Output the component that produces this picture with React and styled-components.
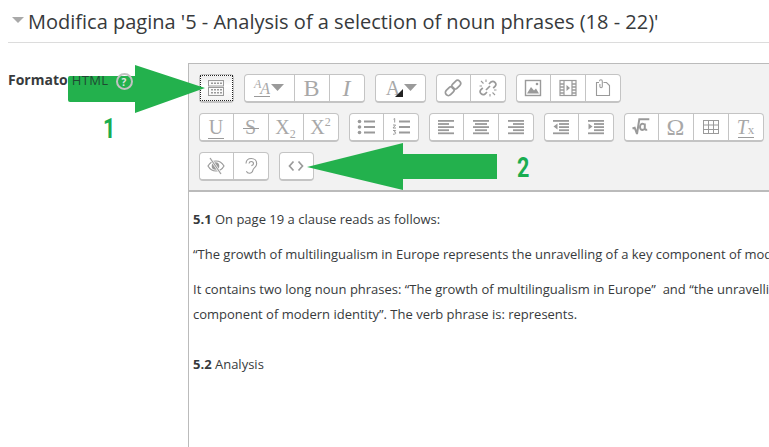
import React from "react";
import styled, { createGlobalStyle } from "styled-components";

const GlobalStyle = createGlobalStyle`
  html, body {
    margin: 0;
    padding: 0;
    background: #fff;
  }
  body {
    font-family: "Open Sans", "Liberation Sans", sans-serif;
    color: #373a3c;
  }
`;

const ICON = "#9a9a9a";

const Svg = ({ children, w = 18, h = 18, vb }) => (
  <svg width={w} height={h} viewBox={vb || `0 0 ${w} ${h}`} fill="none">
    {children}
  </svg>
);

const KitchenSink = () => (
  <Svg>
    <rect x="1.5" y="1.5" width="15" height="5.5" stroke={ICON} />
    <rect x="1.5" y="8.5" width="15" height="8" stroke={ICON} />
    <path d="M4 4.2h2M7 4.2h2M10 4.2h2M13 4.2h2M4 10.8h2M7 10.8h2M10 10.8h2M13 10.8h2M4 13.8h2M7 13.8h2M10 13.8h2M13 13.8h2" stroke={ICON} strokeWidth="1.4" />
  </Svg>
);

const Caret = () => (
  <svg width="13" height="7" viewBox="0 0 13 7">
    <path d="M0 0h13L6.5 7z" fill={ICON} />
  </svg>
);

const BulletList = () => (
  <Svg>
    <g fill={ICON}>
      <circle cx="2.5" cy="3.5" r="1.8" />
      <circle cx="2.5" cy="9" r="1.8" />
      <circle cx="2.5" cy="14.5" r="1.8" />
      <rect x="7" y="2.5" width="11" height="2" />
      <rect x="7" y="8" width="11" height="2" />
      <rect x="7" y="13.5" width="11" height="2" />
    </g>
  </Svg>
);

const NumberList = () => (
  <Svg>
    <path d="M1.5 1.2l1.2-.7v4M1 7h2.6L1 10h3M1 12.5h2.6L2.3 14c1 0 1.5.4 1.5 1s-.6 1.3-2.8 1.2" stroke={ICON} strokeWidth="1" />
    <g fill={ICON}>
      <rect x="7" y="2.5" width="11" height="2" />
      <rect x="7" y="8" width="11" height="2" />
      <rect x="7" y="13.5" width="11" height="2" />
    </g>
  </Svg>
);

const Lines = ({ rows }) => (
  <Svg>
    <g fill={ICON}>
      {rows.map(([x, w], i) => (
        <rect key={i} x={x} y={2 + i * 3.1} width={w} height="1.8" />
      ))}
    </g>
  </Svg>
);

const Indent = ({ out }) => (
  <Svg>
    <g fill={ICON}>
      <rect x="1" y="2" width="16" height="1.8" />
      <rect x="7" y="5.1" width="10" height="1.8" />
      <rect x="7" y="8.2" width="10" height="1.8" />
      <rect x="7" y="11.3" width="10" height="1.8" />
      <rect x="1" y="14.4" width="16" height="1.8" />
      <path d={out ? "M5.5 5.5v6L1.5 8.500z" : "M1.5 5.5v6l4-3z"} />
    </g>
  </Svg>
);

const LinkIcon = () => (
  <Svg>
    <g stroke={ICON} strokeWidth="1.7" transform="rotate(-45 9 9)">
      <rect x="-0.5" y="6" width="10" height="6" rx="3" />
      <rect x="8.5" y="6" width="10" height="6" rx="3" />
    </g>
  </Svg>
);

const UnlinkIcon = () => (
  <Svg>
    <g stroke={ICON} strokeWidth="1.7">
      <path d="M8 13l-2 2a3 3 0 0 1-4.2-4.2l2-2M10 5l2-2a3 3 0 0 1 4.2 4.2l-2 2" />
      <path d="M7 11l4-4" />
      <path d="M4.5 4.5L2 2M7 3V0.5M3 7H0.5M13.5 13.5L16 16M11 15v2.5M15 11h2.5" strokeWidth="1.1" />
    </g>
  </Svg>
);

const ImageIcon = () => (
  <Svg>
    <rect x="1.5" y="1.5" width="15" height="15" stroke={ICON} strokeWidth="1.4" />
    <path d="M3 14.5l4-6.5 3 3.5 2-2 3 5z" fill={ICON} />
    <circle cx="13" cy="5" r="1.3" fill={ICON} />
  </Svg>
);

const VideoIcon = () => (
  <Svg>
    <rect x="1" y="1.5" width="16" height="15" stroke={ICON} strokeWidth="1.2" />
    <path d="M5 1.5v15M13 1.5v15" stroke={ICON} strokeWidth="1.2" />
    <path d="M1 5h4M1 8h4M1 11h4M1 14h4M13 5h4M13 8h4M13 11h4M13 14h4" stroke={ICON} strokeWidth="1.4" />
    <path d="M7.5 6l3.5 3-3.5 3z" fill={ICON} />
  </Svg>
);

const FileIcon = () => (
  <Svg>
    <path d="M5 3.5H2.5v13h13V6.5l-3-3H9.5" stroke={ICON} strokeWidth="1.1" />
    <path d="M5.5 2.2a1.4 1.4 0 0 1 2.8 0v5.3a1.2 1.2 0 0 1-2.4 0V5" stroke={ICON} strokeWidth="1.1" />
  </Svg>
);

const RootIcon = () => (
  <Svg>
    <path d="M0.5 10.5l2.2-.8 2.3 6.3 2.3-14.8h10" stroke={ICON} strokeWidth="2" />
    <path d="M12 6.2c-2.7-1.3-4 .8-4 2.8 0 2.4 1.700 3.900 4 2.100M12.800 5.500V10c0 1.400.7 2 2.400 1.800" stroke={ICON} strokeWidth="2" />
  </Svg>
);

const TableIcon = () => (
  <Svg>
    <rect x="1.5" y="2.5" width="15" height="13" stroke={ICON} />
    <path d="M6.5 2.5v13M11.5 2.5v13M1.5 7h15M1.5 11.5h15" stroke={ICON} />
  </Svg>
);

const EyeIcon = () => (
  <Svg>
    <path d="M1 9c2-3.5 4.7-5 8-5s6 1.5 8 5c-2 3.5-4.7 5-8 5s-6-1.5-8-5z" stroke={ICON} strokeWidth="1.2" />
    <circle cx="8.5" cy="9" r="3.8" fill={ICON} />
    <path d="M3 1l11 16" stroke="#f6f6f6" strokeWidth="2.4" />
    <path d="M3 1l11 16" stroke={ICON} strokeWidth="1.1" />
  </Svg>
);

const EarIcon = () => (
  <Svg>
    <path d="M4 6.5C4.2 3.3 6.4 1.5 9.3 1.5c3.2 0 5.4 2.2 5.4 5.2 0 3.4-3.2 3.9-3.7 6.2-.4 2-1.8 3.3-3.6 3.3-1.4 0-2.5-.7-3-1.9" stroke={ICON} strokeWidth="1.1" />
    <path d="M7 6.5c.2-1.3 1.1-2 2.2-2 1.3 0 2.3 1 2.3 2.2 0 1.1-1 1.6-2.1 1.9" stroke={ICON} strokeWidth="1.1" />
  </Svg>
);

const CodeIcon = () => (
  <svg width="16" height="12" viewBox="0 0 16 12" fill="none">
    <path d="M5.5 1.5L1.5 6l4 4.5M10.5 1.5l4 4.5-4 4.5" stroke={ICON} strokeWidth="1.7" />
  </svg>
);

const Page = styled.div`
  position: relative;
  display: flex;
  flex-direction: column;
  width: 769px;
  height: 447px;
  overflow: hidden;
  background: #fff;
`;

const Heading = styled.h2`
  display: flex;
  align-items: center;
  flex: 0 0 42px;
  gap: 4px;
  margin: 0 0 0 8px;
  padding: 0 0 0 4px;
  border-bottom: 1px solid #dcdcdc;
  font-size: 20px;
  font-weight: 400;
  white-space: nowrap;
  color: #373a3c;
`;

const Twisty = styled.span`
  width: 0;
  height: 0;
  border-left: 6px solid transparent;
  border-right: 6px solid transparent;
  border-top: 6px solid #a9a9a9;
  margin-top: -2px;
`;

const FormRow = styled.div`
  flex: 1;
  display: flex;
  padding: 20px 0 0 8px;
`;

const Label = styled.div`
  position: relative;
  z-index: 2;
  flex: 0 0 180px;
  display: flex;
  align-items: flex-start;
  padding-top: 7px;
  font-size: 14px;
  font-weight: 700;
  line-height: 20px;
  white-space: nowrap;
  color: #373a3c;
`;

const Faded = styled.span`
  margin-left: 4px;
  font-size: 13px;
  font-weight: 400;
  letter-spacing: 0.4px;
  color: #1f4a33;
`;

const HelpBadge = styled.span`
  display: inline-flex;
  align-items: center;
  justify-content: center;
  width: 13px;
  height: 13px;
  margin: 3px 0 0 7px;
  border: 2px solid #c2c2c2;
  border-radius: 50%;
  font-size: 10px;
  font-weight: 700;
  line-height: 1;
  color: #e4e4e4;
`;

const Editor = styled.div`
  flex: 1 0 auto;
  width: 600px;
  border-left: 1px solid #bbb;
  border-top: 1px solid #bbb;
`;

const Toolbar = styled.div`
  display: flex;
  flex-direction: column;
  gap: 9.5px;
  height: 128px;
  box-sizing: border-box;
  padding: 9.5px 0 0 9.5px;
  background: #f2f2f2;
  border-bottom: 2px solid #bbb;
`;

const ToolRow = styled.div`
  display: flex;
  gap: 10px;
`;

const Group = styled.div`
  display: flex;
  height: 29.5px;
  box-sizing: border-box;
  border: 1px solid #c4c4c4;
  border-bottom-width: 2px;
  border-radius: 4px;
  background: #fff;
`;

const Tool = styled.button`
  display: flex;
  align-items: center;
  justify-content: center;
  gap: 1px;
  width: ${({ $wide }) => ($wide ? "51px" : "35px")};
  margin: 0;
  padding: 0;
  border: 0;
  border-left: 1px solid #c4c4c4;
  background: transparent;
  font-family: "Liberation Serif", serif;
  font-size: 20px;
  color: #a8a8a8;

  &:first-child {
    border-left: 0;
    width: ${({ $wide }) => ($wide ? "49px" : "33px")};
  }
`;

const Focused = styled(Tool)`
  && {
    width: 31px;
    margin: 1px;
  }
  background: linear-gradient(#ececec, #fff 40%, #f4f4f4);
  outline: 1px dotted #222;
`;

const Glyph = styled.span`
  position: relative;
  display: inline-block;
  font-size: ${({ $size }) => $size || 20}px;
  font-style: ${({ $italic }) => ($italic ? "italic" : "normal")};
  line-height: 1;
`;

const Bar = styled.span`
  position: absolute;
  left: 50%;
  top: ${({ $top }) => $top}px;
  width: 16px;
  height: 1px;
  margin-left: -8px;
  background: ${ICON};
`;

const Small = styled.span`
  font-size: 12px;
  line-height: 0;
  vertical-align: ${({ $up }) => ($up ? "8px" : "-4px")};
`;

const FontSizeGlyph = styled.span`
  display: inline-flex;
  align-items: flex-end;
  height: 17px;
  border-bottom: 1px solid ${ICON};
  font-size: 16px;
  font-style: italic;
  line-height: 14px;
`;

const TinyA = styled.span`
  align-self: flex-start;
  font-size: 12px;
  margin-right: -1px;
  line-height: 11px;
`;

const ColorA = styled.span`
  position: relative;
  display: inline-block;
  width: 19px;
  height: 20px;
  font-size: 20px;
  line-height: 20px;

  &::after {
    content: "";
    position: absolute;
    right: 0;
    bottom: 1px;
    border-left: 8px solid transparent;
    border-bottom: 8px solid #222;
  }
`;

const Tx = styled.span`
  position: relative;
  display: inline-block;
  font-size: 20px;
  font-style: italic;
  line-height: 1;
`;

const TxSmall = styled.span`
  font-size: 13px;
  font-style: normal;
`;

const Content = styled.div`
  padding: 15px 0 0 4px;
  font-size: 13px;
  line-height: 25px;
  white-space: nowrap;
  overflow: hidden;
  color: #373a3c;
`;

const Para = styled.p`
  margin: 0 0 10px;
`;

const Overlay = styled.svg`
  position: absolute;
  left: 0;
  top: 0;
  z-index: 1;
  pointer-events: none;
`;

const Callout = styled.span`
  position: absolute;
  z-index: 3;
  left: ${({ $x }) => $x}px;
  top: ${({ $y }) => $y}px;
  font-family: "Roboto", "Liberation Sans", sans-serif;
  font-size: 27px;
  font-weight: 700;
  line-height: 1;
  color: #19ad50;
  transform: scaleX(0.8);
  transform-origin: left top;
`;

const row1 = [
  [
    {
      wide: true,
      el: (
        <>
          <FontSizeGlyph>
            <TinyA>A</TinyA>A
          </FontSizeGlyph>
          <Caret />
        </>
      ),
    },
    { el: <Glyph $size={24}>B</Glyph> },
    { el: <Glyph $size={24} $italic>I</Glyph> },
  ],
  [{ wide: true, el: (<><ColorA>A</ColorA><Caret /></>) }],
  [{ el: <LinkIcon /> }, { el: <UnlinkIcon /> }],
  [{ el: <ImageIcon /> }, { el: <VideoIcon /> }, { el: <FileIcon /> }],
];

const left = [[1, 16], [1, 11], [1, 16], [1, 11], [1, 16]];
const center = [[1, 16], [3, 12], [1, 16], [3, 12], [1, 16]];
const right = [[1, 16], [6, 11], [1, 16], [6, 11], [1, 16]];

const row2 = [
  [
    { el: <Glyph>U<Bar $top={21} /></Glyph> },
    { el: <Glyph>S<Bar $top={11} /></Glyph> },
    { el: <Glyph>X<Small>2</Small></Glyph> },
    { el: <Glyph>X<Small $up>2</Small></Glyph> },
  ],
  [{ el: <BulletList /> }, { el: <NumberList /> }],
  [{ el: <Lines rows={left} /> }, { el: <Lines rows={center} /> }, { el: <Lines rows={right} /> }],
  [{ el: <Indent out /> }, { el: <Indent /> }],
  [
    { el: <RootIcon /> },
    { el: <Glyph $size={24}>Ω</Glyph> },
    { el: <TableIcon /> },
    { el: <Tx>T<TxSmall>x</TxSmall><Bar $top={20} /></Tx> },
  ],
];

const row3 = [
  [{ el: <EyeIcon /> }, { el: <EarIcon /> }],
  [{ el: <CodeIcon /> }],
];

const ToolGroups = ({ groups }) =>
  groups.map((tools, i) => (
    <Group key={i}>
      {tools.map((tool, j) => (
        <Tool key={j} $wide={tool.wide}>
          {tool.el}
        </Tool>
      ))}
    </Group>
  ));

export default function App() {
  return (
    <Page>
      <GlobalStyle />
      <Heading>
        <Twisty />
        Modifica pagina '5 - Analysis of a selection of noun phrases (18 - 22)'
      </Heading>
      <FormRow>
        <Label>
          Formato<Faded>HTML</Faded>
          <HelpBadge>?</HelpBadge>
        </Label>
        <Editor>
          <Toolbar>
            <ToolRow>
              <Group>
                <Focused>
                  <KitchenSink />
                </Focused>
              </Group>
              <ToolGroups groups={row1} />
            </ToolRow>
            <ToolRow>
              <ToolGroups groups={row2} />
            </ToolRow>
            <ToolRow>
              <ToolGroups groups={row3} />
            </ToolRow>
          </Toolbar>
          <Content>
            <Para><b>5.1</b> On page 19 a clause reads as follows:</Para>
            <Para>“The growth of multilingualism in Europe represents the unravelling of a key component of modern identity”.</Para>
            <Para>
              It contains two long noun phrases: “The growth of multilingualism in Europe”&nbsp; and “the unravelling of a key
              <br />
              component of modern identity”. The verb phrase is: represents.
              <br />
              <br />
              <b>5.2</b> Analysis
            </Para>
          </Content>
        </Editor>
      </FormRow>
      <Overlay width="769" height="447" viewBox="0 0 769 447">
        <path d="M68 78a2 2 0 0 1 2-2h65V65l70 23-70 25v-11H70a2 2 0 0 1-2-2z" fill="#23b14d" />
        <path d="M497 154H403v-11l-96 24 96 23v-11h94z" fill="#23b14d" />
      </Overlay>
      <Callout $x={103} $y={116}>1</Callout>
      <Callout $x={517} $y={155}>2</Callout>
    </Page>
  );
}
